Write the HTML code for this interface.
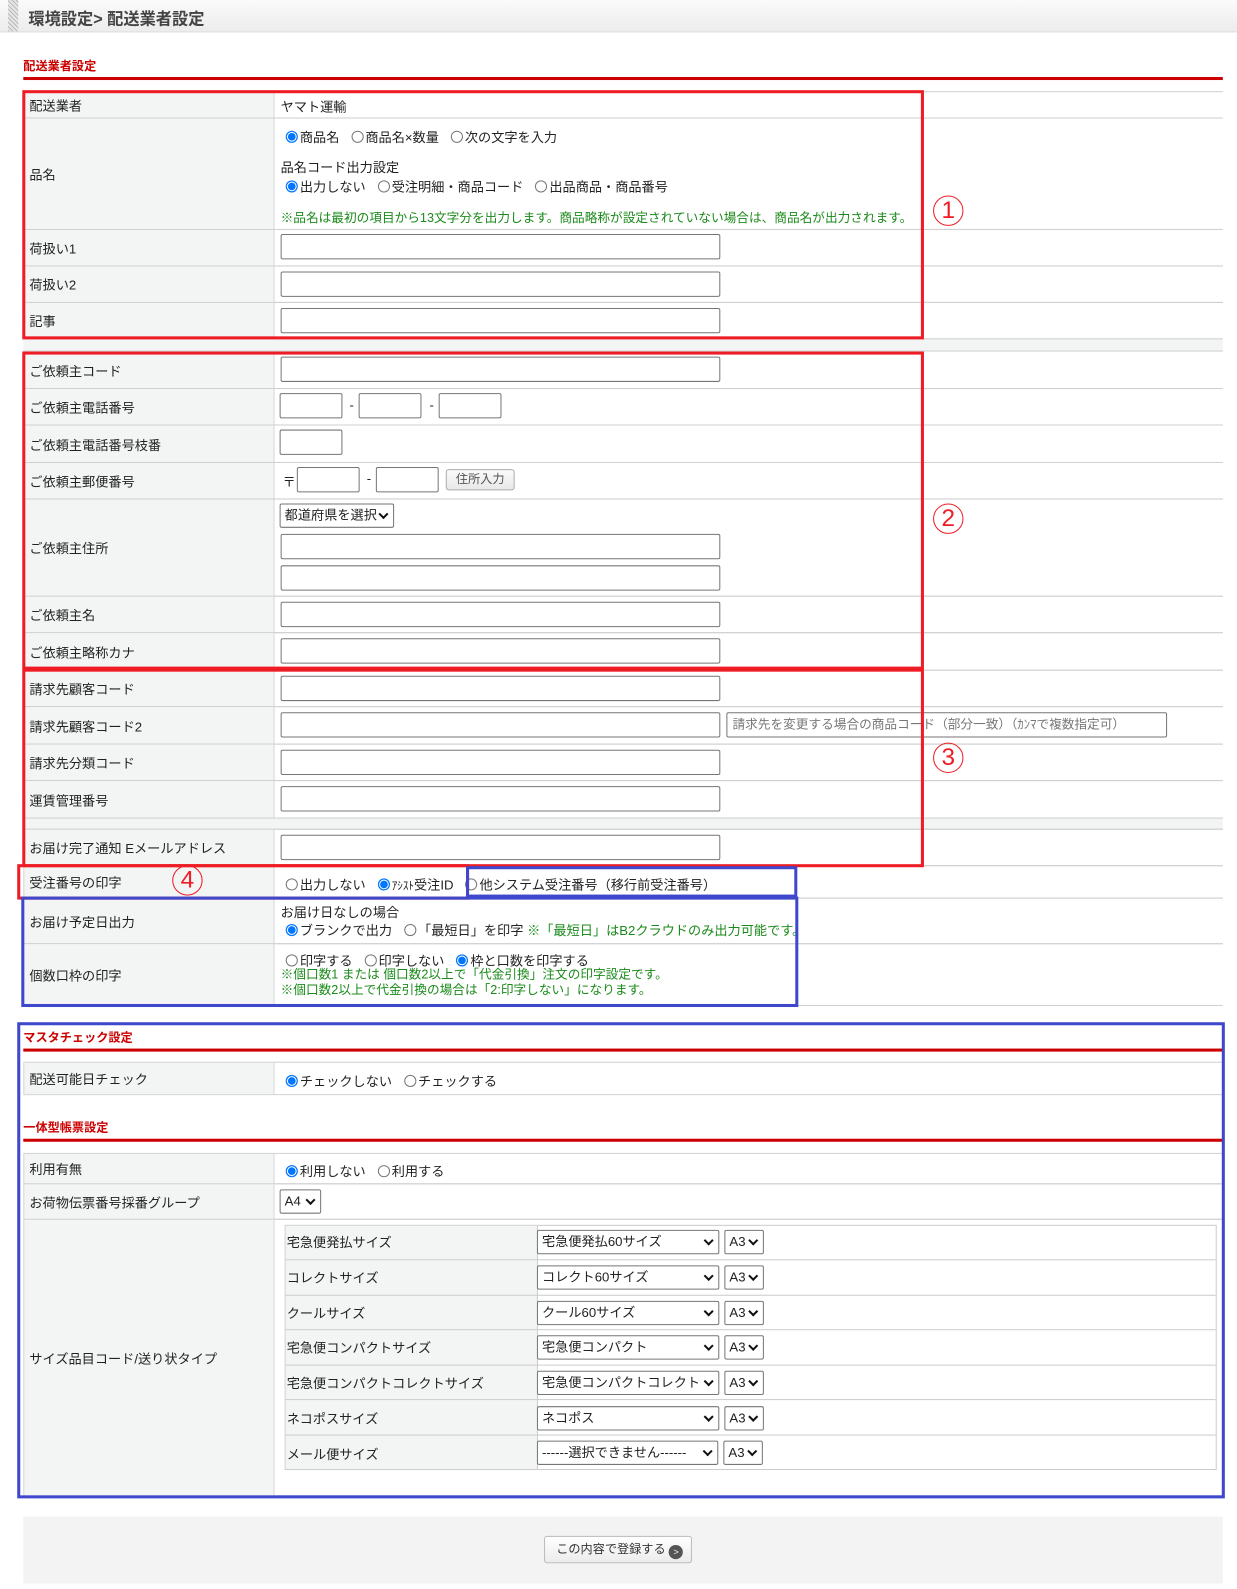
<!DOCTYPE html>
<html><head><meta charset="utf-8"><style>
*{box-sizing:border-box}
body{margin:0;width:1237px;height:1588px;position:relative;background:#fff;font-family:"Liberation Sans","Noto Sans CJK JP",sans-serif;font-size:13px;color:#222;overflow:hidden}
#w{position:absolute;left:0;top:0;width:1221px;height:1568px;transform:scale(1.0131);transform-origin:0 0}
.a{position:absolute;white-space:nowrap}
.row{position:absolute;left:23px;width:1184px;border-bottom:1px solid #d0d0d0;border-top:1px solid #d0d0d0}
.lab{position:absolute;left:0;top:0;bottom:0;width:248px;background:#f3f4f4;border-right:1px solid #d8d8d8;border-left:1px solid #d8d8d8;padding-left:5px;display:flex;align-items:center}
.in{position:absolute;border:1px solid #767676;border-radius:2px;height:25px;background:#fff}
.sel{position:absolute;border:1px solid #767676;border-radius:2px;height:24px;background:#fff;padding-left:4px;line-height:22px;font-size:13px}
.sel:after{content:"";position:absolute;right:6px;top:6px;width:5px;height:5px;border-right:2px solid #111;border-bottom:2px solid #111;transform:rotate(45deg)}
.rd{display:inline-block;width:12px;height:12px;border:1px solid #767676;border-radius:50%;vertical-align:-1px;margin:0 2px 0 8px;background:#fff}
.rd.on{border:1px solid #0075ff;background:radial-gradient(circle,#0075ff 0 3.5px,#fff 4px 4.5px,#0075ff 5px)}
.g{color:#1a8a1a}
.hd{position:absolute;left:23px;color:#c00;font-weight:bold;font-size:12px}
.rl{position:absolute;left:23px;width:1184px;height:3px;background:#c00}
.box{position:absolute;border:3px solid #ee1c25}
.bb{position:absolute;border:3px solid #3f48cc}
.cn{position:absolute;width:30px;height:30px;border:1.5px solid #ee1c25;border-radius:50%;color:#ee1c25;font-size:24px;text-align:center;line-height:28px}
</style></head><body><div id="w">
<div class="a" style="left:0;top:0;width:1237px;height:32px;background:linear-gradient(#fbfbfb,#ececec);border-bottom:1px solid #ddd"></div>
<div class="a" style="left:8px;top:0;width:10px;height:31px;background:repeating-linear-gradient(45deg,#bbb 0 1px,#e6e6e6 1px 3px)"></div>
<div class="a" style="left:28px;top:5px;font-size:16px;font-weight:bold;color:#444">環境設定&gt; 配送業者設定</div>

<div class="hd" style="top:56px">配送業者設定</div>
<div class="rl" style="top:76px"></div>

<div class="row" style="top:90px;height:27px"><div class="lab">配送業者</div><div class="a" style="left:254px;top:4px">ヤマト運輸</div></div>
<div class="row" style="top:116px;height:111px"><div class="lab">品名</div>
<div class="a" style="left:251px;top:8px"><span class="rd on"></span>商品名 <span class="rd"></span>商品名×数量 <span class="rd"></span>次の文字を入力</div>
<div class="a" style="left:254px;top:38px">品名コード出力設定</div>
<div class="a" style="left:251px;top:57px"><span class="rd on"></span>出力しない <span class="rd"></span>受注明細・商品コード <span class="rd"></span>出品商品・商品番号</div>
<div class="a g" style="left:254px;top:87px;font-size:12.5px">※品名は最初の項目から13文字分を出力します。商品略称が設定されていない場合は、商品名が出力されます。</div></div>
<div class="row" style="top:226px;height:37px"><div class="lab">荷扱い1</div></div>
<div class="row" style="top:262px;height:37px"><div class="lab">荷扱い2</div></div>
<div class="row" style="top:298px;height:37px"><div class="lab">記事</div></div>
<div class="row" style="top:334px;height:13px;background:#f3f4f4"></div>
<div class="row" style="top:346px;height:38px"><div class="lab">ご依頼主コード</div></div>
<div class="row" style="top:383px;height:37px"><div class="lab">ご依頼主電話番号</div></div>
<div class="row" style="top:419px;height:38px"><div class="lab">ご依頼主電話番号枝番</div></div>
<div class="row" style="top:456px;height:37px"><div class="lab">ご依頼主郵便番号</div></div>
<div class="row" style="top:492px;height:97px"><div class="lab">ご依頼主住所</div></div>
<div class="row" style="top:588px;height:37px"><div class="lab">ご依頼主名</div></div>
<div class="row" style="top:624px;height:38px"><div class="lab">ご依頼主略称カナ</div></div>
<div class="row" style="top:661px;height:37px"><div class="lab">請求先顧客コード</div></div>
<div class="row" style="top:697px;height:38px"><div class="lab">請求先顧客コード2</div></div>
<div class="row" style="top:734px;height:37px"><div class="lab">請求先分類コード</div></div>
<div class="row" style="top:770px;height:38px"><div class="lab">運賃管理番号</div></div>
<div class="row" style="top:807px;height:12px;background:#f3f4f4"></div>
<div class="row" style="top:818px;height:37px"><div class="lab">お届け完了通知 Eメールアドレス</div></div>
<div class="row" style="top:854px;height:33px"><div class="lab">受注番号の印字</div>
<div class="a" style="left:251px;top:8px"><span class="rd"></span>出力しない <span class="rd on"></span><span style="font-size:11px">ｱｼｽﾄ</span>受注ID <span class="rd"></span>他システム受注番号（移行前受注番号）</div></div>
<div class="row" style="top:886px;height:46px"><div class="lab">お届け予定日出力</div>
<div class="a" style="left:254px;top:3px">お届け日なしの場合</div>
<div class="a" style="left:251px;top:21px"><span class="rd on"></span>ブランクで出力 <span class="rd"></span>「最短日」を印字 <span class="g">※「最短日」はB2クラウドのみ出力可能です。</span></div></div>
<div class="row" style="top:931px;height:62px"><div class="lab">個数口枠の印字</div>
<div class="a" style="left:251px;top:6px"><span class="rd"></span>印字する <span class="rd"></span>印字しない <span class="rd on"></span>枠と口数を印字する</div>
<div class="a g" style="left:254px;top:23px;font-size:12.5px;line-height:15px">※個口数1 または 個口数2以上で「代金引換」注文の印字設定です。<br>※個口数2以上で代金引換の場合は「2:印字しない」になります。</div></div>

<div class="in" style="left:277px;top:231px;width:434px"></div>
<div class="in" style="left:277px;top:268px;width:434px"></div>
<div class="in" style="left:277px;top:304px;width:434px"></div>
<div class="in" style="left:277px;top:352px;width:434px"></div>
<div class="in" style="left:276px;top:388px;width:62px"></div><div class="a" style="left:345px;top:392px">-</div>
<div class="in" style="left:354px;top:388px;width:62px"></div><div class="a" style="left:424px;top:392px">-</div>
<div class="in" style="left:433px;top:388px;width:62px"></div>
<div class="in" style="left:276px;top:424px;width:62px"></div>
<div class="a" style="left:279px;top:465px">〒</div>
<div class="in" style="left:293px;top:461px;width:62px"></div><div class="a" style="left:362px;top:465px">-</div>
<div class="in" style="left:371px;top:461px;width:62px"></div>
<div class="a" style="left:440px;top:463px;width:68px;height:21px;border:1px solid #aaa;border-radius:3px;background:linear-gradient(#fafafa,#e8e8e8);font-size:12px;color:#555;text-align:center;line-height:19px">住所入力</div>
<div class="sel" style="left:276px;top:497px;width:113px">都道府県を選択</div>
<div class="in" style="left:277px;top:527px;width:434px"></div>
<div class="in" style="left:277px;top:558px;width:434px"></div>
<div class="in" style="left:277px;top:594px;width:434px"></div>
<div class="in" style="left:277px;top:630px;width:434px"></div>
<div class="in" style="left:277px;top:667px;width:434px"></div>
<div class="in" style="left:277px;top:703px;width:434px"></div>
<div class="in" style="left:717px;top:703px;width:435px;color:#777;padding-left:5px;line-height:23px;font-size:12.5px">請求先を変更する場合の商品コード（部分一致）（ｶﾝﾏで複数指定可）</div>
<div class="in" style="left:277px;top:740px;width:434px"></div>
<div class="in" style="left:277px;top:776px;width:434px"></div>
<div class="in" style="left:277px;top:824px;width:434px"></div>

<div class="hd" style="top:1015px">マスタチェック設定</div>
<div class="rl" style="top:1035px"></div>
<div class="row" style="top:1048px;height:33px"><div class="lab">配送可能日チェック</div>
<div class="a" style="left:251px;top:8px"><span class="rd on"></span>チェックしない <span class="rd"></span>チェックする</div></div>
<div class="hd" style="top:1104px">一体型帳票設定</div>
<div class="rl" style="top:1124px"></div>
<div class="row" style="top:1138px;height:31px"><div class="lab">利用有無</div>
<div class="a" style="left:251px;top:7px"><span class="rd on"></span>利用しない <span class="rd"></span>利用する</div></div>
<div class="row" style="top:1168px;height:36px"><div class="lab">お荷物伝票番号採番グループ</div></div>
<div class="sel" style="left:276px;top:1174px;width:41px">A4</div>
<div class="row" style="top:1203px;height:274px"><div class="lab">サイズ品目コード/送り状タイプ</div></div>
<div class="a" style="left:281px;top:1209px;width:920px;height:242px;border:1px solid #ccc"></div>
<div class="a" style="left:282px;top:1210px;width:249px;height:240px;background:#f3f4f4;border-right:1px solid #ccc"></div>

<div class="a" style="left:282px;top:1243px;width:918px;border-top:1px solid #ccc"></div>
<div class="a" style="left:282px;top:1278px;width:918px;border-top:1px solid #ccc"></div>
<div class="a" style="left:282px;top:1312px;width:918px;border-top:1px solid #ccc"></div>
<div class="a" style="left:282px;top:1347px;width:918px;border-top:1px solid #ccc"></div>
<div class="a" style="left:282px;top:1381px;width:918px;border-top:1px solid #ccc"></div>
<div class="a" style="left:282px;top:1416px;width:918px;border-top:1px solid #ccc"></div>
<div class="a" style="left:283px;top:1216px">宅急便発払サイズ</div>
<div class="a" style="left:283px;top:1251px">コレクトサイズ</div>
<div class="a" style="left:283px;top:1286px">クールサイズ</div>
<div class="a" style="left:283px;top:1320px">宅急便コンパクトサイズ</div>
<div class="a" style="left:283px;top:1355px">宅急便コンパクトコレクトサイズ</div>
<div class="a" style="left:283px;top:1390px">ネコポスサイズ</div>
<div class="a" style="left:283px;top:1425px">メール便サイズ</div>
<div class="sel" style="left:530px;top:1214px;width:180px">宅急便発払60サイズ</div><div class="sel" style="left:715px;top:1214px;width:39px">A3</div>
<div class="sel" style="left:530px;top:1249px;width:180px">コレクト60サイズ</div><div class="sel" style="left:715px;top:1249px;width:39px">A3</div>
<div class="sel" style="left:530px;top:1284px;width:180px">クール60サイズ</div><div class="sel" style="left:715px;top:1284px;width:39px">A3</div>
<div class="sel" style="left:530px;top:1318px;width:180px">宅急便コンパクト</div><div class="sel" style="left:715px;top:1318px;width:39px">A3</div>
<div class="sel" style="left:530px;top:1353px;width:180px">宅急便コンパクトコレクト</div><div class="sel" style="left:715px;top:1353px;width:39px">A3</div>
<div class="sel" style="left:530px;top:1388px;width:180px">ネコポス</div><div class="sel" style="left:715px;top:1388px;width:39px">A3</div>
<div class="sel" style="left:530px;top:1422px;width:179px">------選択できません------</div><div class="sel" style="left:714px;top:1422px;width:39px">A3</div>

<div class="a" style="left:23px;top:1497px;width:1184px;height:66px;background:#f3f3f3"></div>
<div class="a" style="left:537px;top:1516px;width:146px;height:27px;border:1px solid #bbb;border-radius:3px;background:linear-gradient(#fff,#ececec);font-size:12px;color:#333;line-height:25px;padding-left:11px">この内容で登録する <span style="display:inline-block;width:14px;height:14px;border-radius:50%;background:#555;color:#fff;font-size:9px;line-height:14px;text-align:center;vertical-align:-2px">&gt;</span></div>

<div class="box" style="left:22px;top:89px;width:890px;height:246px"></div>
<div class="box" style="left:22px;top:347px;width:890px;height:314px"></div>
<div class="box" style="left:22px;top:660px;width:890px;height:196px"></div>
<div class="box" style="left:17px;top:853px;width:446px;height:35px"></div>
<div class="bb" style="left:460px;top:855px;width:327px;height:31px"></div>
<div class="bb" style="left:21px;top:885px;width:767px;height:109px"></div>
<div class="bb" style="left:17px;top:1009px;width:1192px;height:470px"></div>
<div class="cn" style="left:921px;top:193px">1</div>
<div class="cn" style="left:921px;top:497px">2</div>
<div class="cn" style="left:921px;top:733px">3</div>
<div class="cn" style="left:170px;top:854px">4</div>
</div></body></html>
